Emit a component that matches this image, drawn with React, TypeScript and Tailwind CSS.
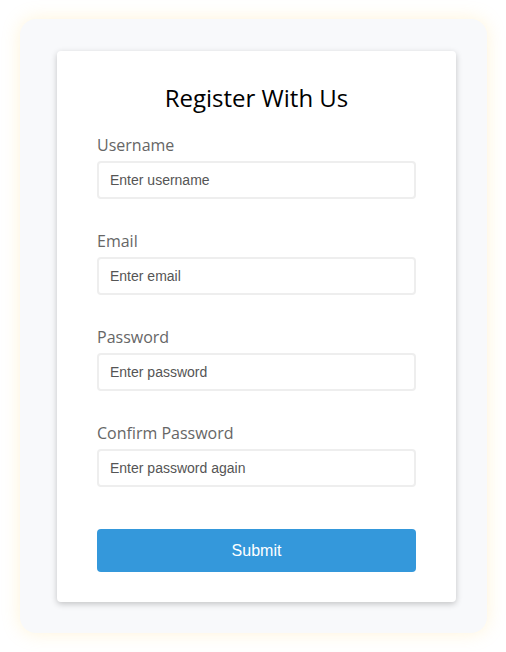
import React, { useState } from 'react';

const fields = [
  { label: 'Username', type: 'text', placeholder: 'Enter username' },
  { label: 'Email', type: 'email', placeholder: 'Enter email' },
  { label: 'Password', type: 'password', placeholder: 'Enter password' },
  { label: 'Confirm Password', type: 'password', placeholder: 'Enter password again' },
];

const App: React.FC = () => {
  const [values, setValues] = useState<string[]>(['', '', '', '']);

  const handleChange = (i: number, v: string) => {
    const next = [...values];
    next[i] = v;
    setValues(next);
  };

  return (
    <div className="min-h-screen bg-white pl-[20px] pt-[19px]">
      <div className="w-[467px] h-[614px] rounded-[16px] bg-[#f8f9fb] shadow-[0_0_18px_rgba(255,214,120,0.28)] pl-[37px] pt-[32px]">
        <div className="w-[399px] bg-white rounded-[4px] shadow-[0_2px_6px_rgba(0,0,0,0.22)] px-[40px] pt-[31px] pb-[30px]">
          <h2 className="text-center text-[24px] leading-[32px] text-black font-['Open_Sans',sans-serif] mb-[19px]">
            Register With Us
          </h2>
          <form onSubmit={(e) => e.preventDefault()}>
            {fields.map((f, i) => (
              <div key={f.label} className={i < fields.length - 1 ? 'mb-[30px]' : 'mb-[42px]'}>
                <label className="block text-[16px] leading-[24px] text-[#666] font-['Open_Sans',sans-serif] mb-[4px]">
                  {f.label}
                </label>
                <input
                  type={f.type}
                  value={values[i]}
                  onChange={(e) => handleChange(i, e.target.value)}
                  placeholder={f.placeholder}
                  className="block w-full h-[38px] px-[11px] border-2 border-[#eeeeee] rounded-[4px] text-[14px] font-['Liberation_Sans',Arial,sans-serif] text-[#333] placeholder:text-[#555] focus:outline-none"
                />
              </div>
            ))}
            <button
              type="submit"
              className="block w-full h-[43px] rounded-[4px] bg-[#3498db] text-white text-[16px] font-['Liberation_Sans',Arial,sans-serif]"
            >
              Submit
            </button>
          </form>
        </div>
      </div>
    </div>
  );
};

export default App;
